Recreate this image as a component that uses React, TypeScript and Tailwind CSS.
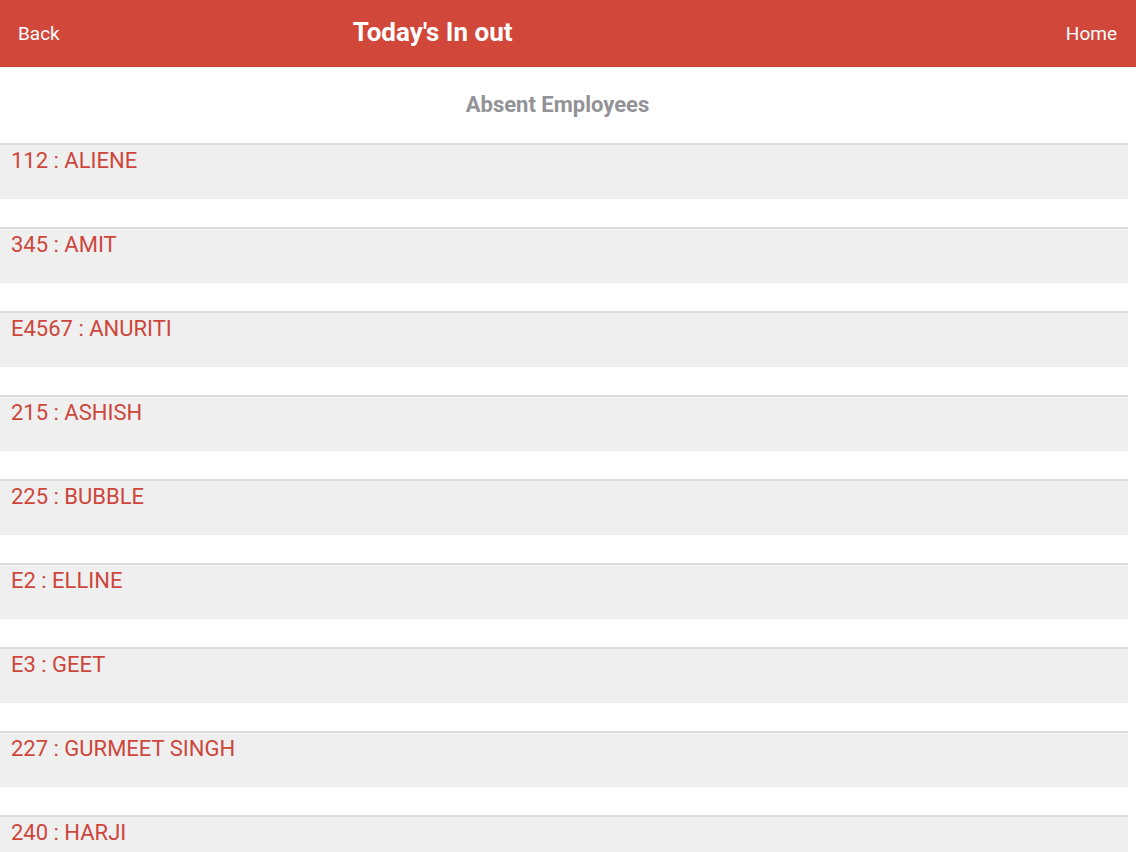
import React from "react";

const employees = [
  "112 : ALIENE",
  "345 : AMIT",
  "E4567 : ANURITI",
  "215 : ASHISH",
  "225 : BUBBLE",
  "E2 : ELLINE",
  "E3 : GEET",
  "227 : GURMEET SINGH",
  "240 : HARJI",
];

export default function App() {
  return (
    <div
      className="w-[1136px] h-[852px] overflow-hidden bg-white"
      style={{ fontFamily: "Roboto, 'Liberation Sans', sans-serif" }}
    >
      <header className="h-[67px] bg-[#d1473a] flex items-center text-white border-b border-[#c03e32]">
        <span className="pl-[18px] text-[19px] leading-none">Back</span>
        <span className="ml-[293px] text-[26px] font-bold leading-none -mt-[2px]">Today's In out</span>
        <span className="ml-auto pr-[19px] text-[19px] leading-none">Home</span>
      </header>
      <div className="h-[76px] flex items-center justify-center">
        <span className="ml-[-21px] text-[22px] font-bold text-[#929297] leading-none">Absent Employees</span>
      </div>
      <div className="w-[1128px]">
        {employees.map((e) => (
          <div key={e} className="mb-[28px]">
            <div className="h-[3px] bg-[#dcdcde] border-b border-[#f6f6f7]" />
            <div className="h-[53px] bg-[#efeff0] pl-[11px] pt-[2px]">
              <span className="text-[22px] leading-[26px] text-[#cd463b]">{e}</span>
            </div>
          </div>
        ))}
      </div>
    </div>
  );
}
